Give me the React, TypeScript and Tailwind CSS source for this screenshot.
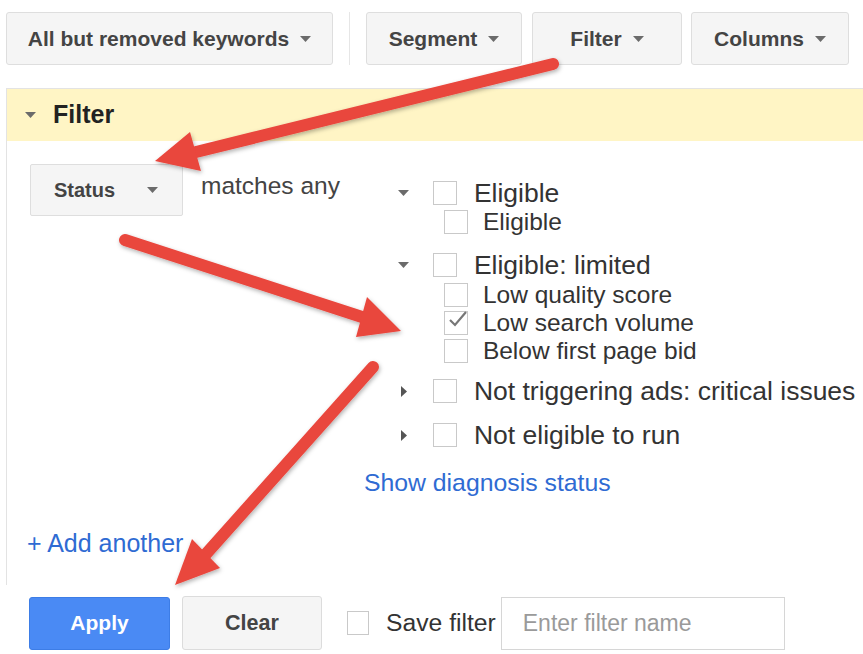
import React from 'react'

const font = "font-['Liberation_Sans',Arial,sans-serif]"

function Caret({ className = '' }: { className?: string }) {
  return (
    <svg width="11" height="6" viewBox="0 0 11 6" className={className}>
      <path d="M0 0 L11 0 L5.5 6 Z" fill="#6b6b6b" />
    </svg>
  )
}

function CaretRight() {
  return (
    <svg width="6" height="11" viewBox="0 0 6 11">
      <path d="M0 0 L6 5.5 L0 11 Z" fill="#555" />
    </svg>
  )
}

function ToolButton({ label, width }: { label: string; width: string }) {
  return (
    <button
      type="button"
      className={`${width} h-[53px] flex items-center justify-center gap-[11px] bg-[#f5f5f5] border border-[#dedede] rounded-[3px] text-[21px] font-bold text-[#444]`}
    >
      <span>{label}</span>
      <Caret className="mt-[1px]" />
    </button>
  )
}

function Box({ checked = false }: { checked?: boolean }) {
  return (
    <span className="relative flex-shrink-0 w-[24px] h-[24px] border border-[#c9c9c9] bg-white">
      {checked && (
        <svg className="absolute -top-[4px] left-[2px]" width="22" height="22" viewBox="0 0 22 22">
          <path d="M3 12 L8 17 L19 4" fill="none" stroke="#777" strokeWidth="2.2" />
        </svg>
      )}
    </span>
  )
}

function ParentRow({ label, open }: { label: string; open: boolean }) {
  return (
    <div className="flex items-center h-[28px]">
      <span className="w-[35px] flex justify-start">{open ? <Caret /> : <span className="ml-[3px]"><CaretRight /></span>}</span>
      <Box />
      <span className="ml-[17px] text-[26.5px] leading-[28px] text-[#333]">{label}</span>
    </div>
  )
}

function ChildRow({ label, checked }: { label: string; checked?: boolean }) {
  return (
    <div className="flex items-center h-[28px] pl-[46px]">
      <Box checked={checked} />
      <span className="ml-[15px] text-[24.5px] leading-[28px] text-[#333]">{label}</span>
    </div>
  )
}

function Arrow({ tail, base, tip, w1, w2 }: { tail: number[]; base: number[]; tip: number[]; w1: number[]; w2: number[] }) {
  return (
    <g filter="url(#shadow)">
      <line x1={tail[0]} y1={tail[1]} x2={base[0]} y2={base[1]} stroke="#e9463d" strokeWidth="12" strokeLinecap="round" />
      <polygon points={`${tip.join(',')} ${w1.join(',')} ${w2.join(',')}`} fill="#e9463d" strokeLinejoin="round" />
    </g>
  )
}

export default function App() {
  return (
    <div className={`relative w-[863px] h-[654px] overflow-hidden bg-white ${font}`}>
      {/* toolbar */}
      <div className="flex items-center pt-[12px] pl-[6px]">
        <ToolButton label="All but removed keywords" width="w-[327px]" />
        <span className="mx-[16px] w-px h-[53px] bg-[#e6e6e6]" />
        <ToolButton label="Segment" width="w-[156px]" />
        <span className="w-[10px]" />
        <ToolButton label="Filter" width="w-[150px]" />
        <span className="w-[9px]" />
        <ToolButton label="Columns" width="w-[158px]" />
      </div>

      {/* filter panel */}
      <div className="mt-[23px] ml-[6px] border-l border-t border-[#e3e3e3]">
        <div className="h-[52px] bg-[#fff5c5] flex items-center pl-[18px] gap-[17px]">
          <Caret />
          <span className="text-[25px] font-bold text-[#222]">Filter</span>
        </div>
        <div className="h-[444px] pt-[23px] pl-[23px]">
          <div className="flex items-start">
            <button
              type="button"
              className="w-[153px] h-[52px] flex items-center justify-between pl-[23px] pr-[24px] bg-[#f5f5f5] border border-[#dedede] rounded-[2px] text-[20px] font-bold text-[#444]"
            >
              <span>Status</span>
              <Caret />
            </button>
            <span className="ml-[18px] mt-[8px] text-[24.5px] leading-[28px] text-[#444]">matches any</span>
            <div className="ml-[24px] mt-[15px] flex flex-col">
              <div className="pl-[34px]">
                <ParentRow label="Eligible" open />
                <div className="mt-[1px]" />
                <ChildRow label="Eligible" />
                <div className="mt-[15px]" />
                <ParentRow label="Eligible: limited" open />
                <div className="mt-[2px]" />
                <ChildRow label="Low quality score" />
                <ChildRow label="Low search volume" checked />
                <ChildRow label="Below first page bid" />
                <div className="mt-[12px]" />
                <ParentRow label="Not triggering ads: critical issues" open={false} />
                <div className="mt-[16px]" />
                <ParentRow label="Not eligible to run" open={false} />
              </div>
              <a className="mt-[20px] text-[24.8px] leading-[28px] text-[#2f6bd3]">Show diagnosis status</a>
            </div>
          </div>
          <a className="block -ml-[3px] mt-[32px] text-[25px] leading-[28px] text-[#2f6bd3]">+ Add another</a>
        </div>
      </div>

      {/* footer */}
      <div className="flex items-center pl-[29px] pt-[11px]">
        <button
          type="button"
          className="w-[141px] h-[53px] bg-[#4a8af4] border border-[#3d7de6] rounded-[3px] text-white text-[21px] font-bold"
        >
          Apply
        </button>
        <button
          type="button"
          className="ml-[12px] w-[140px] h-[54px] bg-[#f5f5f5] border border-[#dcdcdc] rounded-[3px] text-[#444] text-[21.5px] font-bold"
        >
          Clear
        </button>
        <span className="ml-[25px] w-[22px] h-[24px] border border-[#c9c9c9]" />
        <span className="ml-[17px] text-[24.7px] text-[#333]">Save filter</span>
        <input
          className="ml-[5px] w-[284px] h-[53px] border border-[#d6d6d6] px-[21px] text-[23px] text-[#333] placeholder:text-[#9a9a9a] outline-none"
          placeholder="Enter filter name"
        />
      </div>

      {/* annotation arrows */}
      <svg className="absolute inset-0 pointer-events-none" width="863" height="654">
        <defs>
          <filter id="shadow" x="-20%" y="-20%" width="140%" height="140%">
            <feDropShadow dx="1" dy="2" stdDeviation="2" floodColor="#000" floodOpacity="0.3" />
          </filter>
        </defs>
        <Arrow tail={[553, 64]} base={[196, 152]} tip={[155, 161]} w1={[190, 132]} w2={[201, 171]} />
        <Arrow tail={[125, 240]} base={[362, 317]} tip={[401, 331]} w1={[367, 297]} w2={[356, 337]} />
        <Arrow tail={[373, 367]} base={[206, 554]} tip={[175, 585]} w1={[192, 539]} w2={[220, 568]} />
      </svg>
    </div>
  )
}
